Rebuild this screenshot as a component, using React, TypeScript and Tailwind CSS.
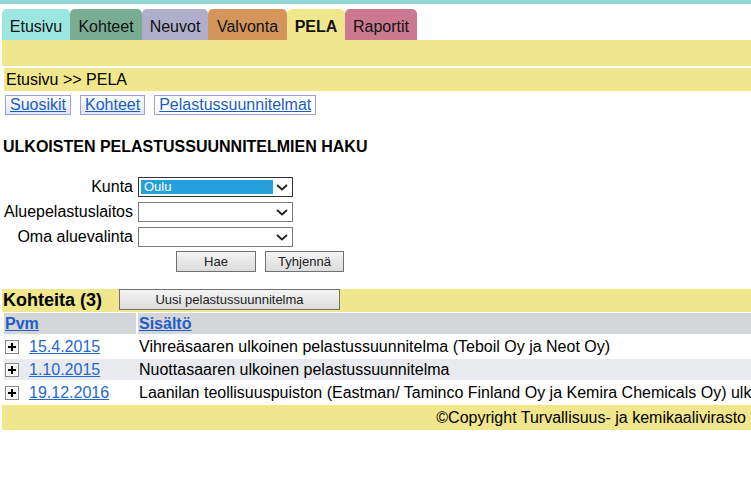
import React from 'react'

const tabs = [
  { label: 'Etusivu', cls: 'w-[68px] bg-[#9ce5e1]' },
  { label: 'Kohteet', cls: 'w-[72px] bg-[#78ad93]' },
  { label: 'Neuvot', cls: 'w-[66px] bg-[#afafcb]' },
  { label: 'Valvonta', cls: 'w-[79px] bg-[#d3955a]' },
  { label: 'PELA', cls: 'w-[58px] bg-[#f0e68c] font-bold' },
  { label: 'Raportit', cls: 'w-[72px] bg-[#cb7891]' },
]

const rows = [
  { date: '15.4.2015', text: 'Vihreäsaaren ulkoinen pelastussuunnitelma (Teboil Oy ja Neot Oy)', bg: 'bg-white' },
  { date: '1.10.2015', text: 'Nuottasaaren ulkoinen pelastussuunnitelma', bg: 'bg-[#e8eaed]' },
  { date: '19.12.2016', text: 'Laanilan teollisuuspuiston (Eastman/ Taminco Finland Oy ja Kemira Chemicals Oy) ulkoinen pelastussuunnitelma', bg: 'bg-white' },
]

function Chevron() {
  return (
    <svg width="12" height="7" viewBox="0 0 12 7" className="shrink-0">
      <path d="M1 1 L6 5.5 L11 1" fill="none" stroke="#222" strokeWidth="1.8" />
    </svg>
  )
}

function Select({ value, focused }: { value?: string; focused?: boolean }) {
  return (
    <div
      className={`w-[155px] h-[20px] bg-white flex items-center pl-[2px] pr-[4px] border ${focused ? 'border-[#333]' : 'border-[#7a7a7a]'}`}
    >
      <div className="flex-1 h-[14px] mr-[3px]">
        {value && (
          <div className="h-full w-full bg-[#26a0da] text-white text-[13px] leading-[14px] pl-[3px]">{value}</div>
        )}
      </div>
      <Chevron />
    </div>
  )
}

function Plus() {
  return (
    <svg width="14" height="14" viewBox="0 0 14 14" className="shrink-0">
      <rect x="0.5" y="0.5" width="13" height="13" fill="#f2f2f2" stroke="#8a8a8a" />
      <rect x="1.5" y="1.5" width="11" height="11" fill="none" stroke="#ffffff" />
      <path d="M3 7 H11 M7 3 V11" stroke="#000" strokeWidth="2" />
    </svg>
  )
}

function GrayButton({ label, cls }: { label: string; cls: string }) {
  return (
    <div
      className={`h-[21px] border border-[#707070] bg-gradient-to-b from-[#f4f4f4] to-[#dcdcdc] text-[13px] leading-[19px] text-[#222] text-center ${cls}`}
    >
      {label}
    </div>
  )
}

export default function App() {
  return (
    <div className="w-[751px] h-[480px] overflow-hidden bg-white text-[16px] text-black font-['Liberation_Sans',Arial,sans-serif]">
      <div className="h-[4px] bg-[#8fd9d5]" />

      {/* tabs */}
      <div className="flex pl-[2px] pt-[5px]">
        {tabs.map((t) => (
          <div
            key={t.label}
            className={`h-[31px] rounded-t-[5px] flex items-end justify-center pb-[4px] leading-[18px] text-[#111] ${t.cls}`}
          >
            {t.label}
          </div>
        ))}
      </div>

      <div className="ml-[2px] h-[26px] bg-[#f0e68c]" />
      <div className="ml-[4px] mt-[2px] h-[23px] bg-[#f0e68c] pl-[2px] leading-[23px]">Etusivu &gt;&gt; PELA</div>

      {/* sub tabs */}
      <div className="flex gap-[9px] pl-[5px] mt-[4px]">
        <a className="h-[20px] px-[4px] border border-[#9f9fe0] bg-gradient-to-b from-white to-[#dfe8f2] text-[#1c5dc4] underline leading-[18px]">Suosikit</a>
        <a className="h-[20px] px-[4px] border border-[#9f9fe0] bg-gradient-to-b from-white to-[#dfe8f2] text-[#1c5dc4] underline leading-[18px]">Kohteet</a>
        <a className="h-[20px] px-[4px] border border-[#9f9fe0] bg-white text-[#1c5dc4] underline leading-[18px]">Pelastussuunnitelmat</a>
      </div>

      <h2 className="mt-[23px] ml-[3px] font-bold leading-[18px]">ULKOISTEN PELASTUSSUUNNITELMIEN HAKU</h2>

      {/* search form */}
      <div className="mt-[21px] grid grid-cols-[133px_155px] gap-x-[5px] gap-y-[5px] items-center">
        <div className="text-right leading-[18px]">Kunta</div>
        <Select value="Oulu" focused />
        <div className="text-right leading-[18px]">Aluepelastuslaitos</div>
        <Select />
        <div className="text-right leading-[18px]">Oma aluevalinta</div>
        <Select />
      </div>
      <div className="flex gap-[9px] pl-[176px] mt-[4px]">
        <GrayButton label="Hae" cls="w-[80px]" />
        <GrayButton label="Tyhjennä" cls="w-[79px]" />
      </div>

      {/* results */}
      <div className="mt-[17px] ml-[2px] h-[23px] bg-[#f0e68c] flex items-start">
        <div className="pl-[1px] w-[117px] shrink-0 font-bold text-[18px] leading-[23px]">Kohteita (3)</div>
        <GrayButton label="Uusi pelastussuunnitelma" cls="w-[221px]" />
      </div>

      <div className="ml-[4px] mt-[1px] flex flex-col gap-[2px] whitespace-nowrap">
        <div className="flex gap-[2px] h-[21px] leading-[21px]">
          <div className="w-[132px] bg-[#d3d5d8] pl-[1px]">
            <a className="font-bold underline text-[#1f5dc8]">Pvm</a>
          </div>
          <div className="flex-1 bg-[#d3d5d8] pl-[1px]">
            <a className="font-bold underline text-[#1f5dc8]">Sisältö</a>
          </div>
        </div>
        {rows.map((r) => (
          <div key={r.date} className={`flex gap-[2px] h-[21px] leading-[21px] ${r.bg}`}>
            <div className="w-[132px] shrink-0 flex items-center pl-[1px]">
              <Plus />
              <a className="ml-[10px] underline text-[#2468cc]">{r.date}</a>
            </div>
            <div className="pl-[1px]">{r.text}</div>
          </div>
        ))}
      </div>

      <div className="mt-[2px] ml-[2px] w-[749px] h-[25px] bg-[#f0e68c] text-right pr-[5px] leading-[25px]">
        ©Copyright Turvallisuus- ja kemikaalivirasto
      </div>
    </div>
  )
}
